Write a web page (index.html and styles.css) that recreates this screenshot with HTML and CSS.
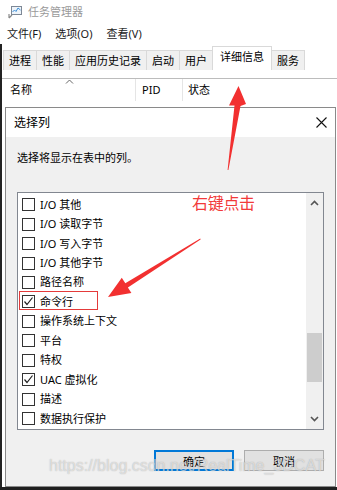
FILE: index.html
```html
<!DOCTYPE html>
<html lang="zh-CN">
<head>
<meta charset="utf-8">
<title>任务管理器</title>
<link rel="stylesheet" href="styles.css">
</head>
<body>
<div class="window">
  <div class="titlebar">
    <svg class="app-icon" width="15" height="14" viewBox="0 0 15 14">
      <rect x="3.5" y="1.5" width="10" height="8" fill="#eef4fa" stroke="#7d8896"/>
      <polyline points="4.5,7 6.5,5 8,6.5 10,3 12.5,5" fill="none" stroke="#3b8fd9" stroke-width="1"/>
      <path d="M1 13 L4 10 M1 9 L1 13" stroke="#8a8a8a" stroke-width="1.2" fill="none"/>
    </svg>
    <span class="title-text">任务管理器</span>
  </div>
  <div class="menubar">
    <span>文件(F)</span>
    <span>选项(O)</span>
    <span>查看(V)</span>
  </div>
  <div class="main">
    <div class="tabs">
      <div class="tab">进程</div>
      <div class="tab">性能</div>
      <div class="tab">应用历史记录</div>
      <div class="tab">启动</div>
      <div class="tab">用户</div>
      <div class="tab active">详细信息</div>
      <div class="tab">服务</div>
    </div>
    <div class="grid-header">
      <div class="col col-name">名称
        <svg class="sort-caret" width="9" height="5" viewBox="0 0 9 5"><polyline points="1,4.5 4.5,1 8,4.5" fill="none" stroke="#666" stroke-width="1"/></svg>
      </div>
      <div class="col col-pid">PID</div>
      <div class="col col-status">状态</div>
    </div>
  </div>
</div>

<div class="dialog">
  <div class="dlg-title">
    <span>选择列</span>
    <svg class="close" width="11" height="11" viewBox="0 0 11 11"><path d="M0.5 0.5 L10.5 10.5 M10.5 0.5 L0.5 10.5" stroke="#111" stroke-width="1.1"/></svg>
  </div>
  <div class="dlg-body">
    <p class="desc">选择将显示在表中的列。</p>
    <div class="listbox">
      <div class="items">
        <div class="item"><span class="cb"></span>I/O 其他</div>
        <div class="item"><span class="cb"></span>I/O 读取字节</div>
        <div class="item"><span class="cb"></span>I/O 写入字节</div>
        <div class="item"><span class="cb"></span>I/O 其他字节</div>
        <div class="item"><span class="cb"></span>路径名称</div>
        <div class="item"><span class="cb checked"><svg width="11" height="11" viewBox="0 0 11 11"><polyline points="1.5,5.5 4,8.5 9.5,1.5" fill="none" stroke="#222" stroke-width="1.2"/></svg></span>命令行</div>
        <div class="item"><span class="cb"></span>操作系统上下文</div>
        <div class="item"><span class="cb"></span>平台</div>
        <div class="item"><span class="cb"></span>特权</div>
        <div class="item"><span class="cb checked"><svg width="11" height="11" viewBox="0 0 11 11"><polyline points="1.5,5.5 4,8.5 9.5,1.5" fill="none" stroke="#222" stroke-width="1.2"/></svg></span>UAC 虚拟化</div>
        <div class="item"><span class="cb"></span>描述</div>
        <div class="item"><span class="cb"></span>数据执行保护</div>
      </div>
      <div class="scrollbar">
        <svg class="sb-arrow" width="9" height="6" viewBox="0 0 9 6"><polyline points="1,5 4.5,1.5 8,5" fill="none" stroke="#555" stroke-width="1.6"/></svg>
        <div class="sb-track"><div class="sb-thumb"></div></div>
        <svg class="sb-arrow" width="9" height="6" viewBox="0 0 9 6"><polyline points="1,1 4.5,4.5 8,1" fill="none" stroke="#555" stroke-width="1.6"/></svg>
      </div>
    </div>
    <div class="buttons">
      <button class="btn default">确定</button>
      <button class="btn">取消</button>
    </div>
  </div>
</div>

<svg class="arrows" width="337" height="490" viewBox="0 0 337 490">
  <polygon fill="#f23030" points="227.6,170 228.4,170 240.5,106 246,104 238.5,86 229,105.5 234.5,105.5"/>
  <polygon fill="#f23030" points="200.3,238.6 200.6,239.4 127.9,287.6 131.4,292.9 108,297 121.8,277.7 125.3,283.2"/>
</svg>
<div class="note">右键点击</div>
<div class="highlight"></div>
<div class="watermark">https://blog.csdn.net/RealTime_3DCAT</div>
</body>
</html>
```

FILE: styles.css
```css
* { box-sizing: border-box; }
html, body { margin: 0; padding: 0; }
body {
  width: 337px;
  height: 490px;
  overflow: hidden;
  position: relative;
  background: #1f1f1f;
  font-family: "Noto Sans", "Noto Sans CJK SC", sans-serif;
  font-size: 11px;
  color: #000;
}
.window {
  height: 487px;
  background: #fff;
  display: flex;
  flex-direction: column;
}
.titlebar {
  height: 24px;
  display: flex;
  align-items: center;
  padding-left: 8px;
  gap: 5px;
}
.app-icon { display: block; }
.title-text {
  color: #9a9a9a;
  font-size: 11px;
  line-height: 14px;
}
.menubar {
  height: 20px;
  display: flex;
  align-items: center;
  padding-left: 7px;
  gap: 14px;
  line-height: 14px;
  color: #1a1a1a;
}
.main {
  flex: 1;
  border-left: 2px solid #232323;
  background: #fff;
}
.tabs {
  height: 26px;
  display: flex;
  align-items: flex-end;
  padding-left: 1px;
  padding-top: 2px;
}
.tab {
  height: 20px;
  padding: 0 5px;
  background: #f0f0f0;
  border: 1px solid #d9d9d9;
  border-bottom: none;
  border-right: none;
  display: flex;
  align-items: center;
  line-height: 14px;
  white-space: nowrap;
}
.tab:last-child { border-right: 1px solid #d9d9d9; }
.tab.active {
  height: 24px;
  background: #fff;
  padding: 0 7px 4px;
  border-right: 1px solid #d9d9d9;
}
.tab.active + .tab { border-left: none; }
.grid-header {
  margin-top: 8px;
  height: 23px;
  border-top: 1px solid #bcbcbc;
  display: flex;
  line-height: 14px;
}
.col {
  display: flex;
  align-items: center;
  position: relative;
}
.col-name {
  width: 134px;
  padding-left: 8px;
  border-right: 1px solid #e5e5e5;
}
.col-pid {
  width: 47px;
  padding-left: 6px;
  border-right: 1px solid #e5e5e5;
}
.col-status { padding-left: 5px; }
.sort-caret {
  position: absolute;
  left: 63px;
  top: 0;
}

.dialog {
  position: absolute;
  left: 5px;
  top: 107px;
  width: 331px;
  height: 380px;
  border: 1px solid #8a8a8a;
  background: #f0f0f0;
  display: flex;
  flex-direction: column;
}
.dlg-title {
  height: 29px;
  background: #fff;
  display: flex;
  align-items: center;
  justify-content: space-between;
  padding: 0 8px 0 8px;
  font-size: 12px;
  line-height: 14px;
}
.close { display: block; margin-right: 0; }
.dlg-body {
  flex: 1;
  padding: 0 11px 0 11px;
  display: flex;
  flex-direction: column;
}
.desc {
  margin: 14px 0 0 0;
  line-height: 14px;
  height: 14px;
}
.listbox {
  margin-top: 27px;
  height: 238px;
  border: 1px solid #828790;
  background: #fff;
  display: flex;
}
.items {
  flex: 1;
  padding: 2px 0 0 4px;
}
.item {
  height: 19.45px;
  display: flex;
  align-items: center;
  gap: 5px;
  line-height: 14px;
  white-space: nowrap;
}
.cb {
  width: 13px;
  height: 13px;
  border: 1px solid #333;
  background: #fff;
  display: flex;
  align-items: center;
  justify-content: center;
  flex: none;
}
.cb svg { display: block; }
.scrollbar {
  width: 17px;
  background: #f0f0f0;
  display: flex;
  flex-direction: column;
  align-items: center;
  padding: 7px 0 7px;
  margin-right: 0;
}
.sb-arrow { display: block; flex: none; }
.sb-track {
  flex: 1;
  width: 100%;
  padding: 127px 1px 0;
}
.sb-thumb {
  height: 49px;
  background: #cdcdcd;
}
.buttons {
  margin-top: 20px;
  display: flex;
  justify-content: flex-end;
  gap: 10px;
}
.btn {
  width: 80px;
  height: 21px;
  font-family: "Noto Sans CJK SC", sans-serif;
  font-size: 11px;
  line-height: 14px;
  padding: 0;
  background: #e1e1e1;
  border: 1px solid #adadad;
  color: #000;
}
.btn.default { border: 2px solid #0078d7; }

.arrows {
  position: absolute;
  left: 0;
  top: 0;
  pointer-events: none;
}
.note {
  position: absolute;
  left: 192px;
  top: 192px;
  font-family: "Noto Sans CJK SC", sans-serif;
  font-size: 16px;
  line-height: 20px;
  color: #f23a3a;
  letter-spacing: -0.3px;
}
.highlight {
  position: absolute;
  left: 19px;
  top: 291px;
  width: 79px;
  height: 19px;
  border: 1px solid #e43a3a;
}
.watermark {
  position: absolute;
  left: 49px;
  top: 456px;
  font-family: "Liberation Sans", Arial, sans-serif;
  font-size: 16px;
  line-height: 20px;
  color: rgba(255, 255, 255, 0.55);
  text-shadow: 0 0 1px rgba(110, 110, 110, 0.55);
  white-space: nowrap;
}
```
